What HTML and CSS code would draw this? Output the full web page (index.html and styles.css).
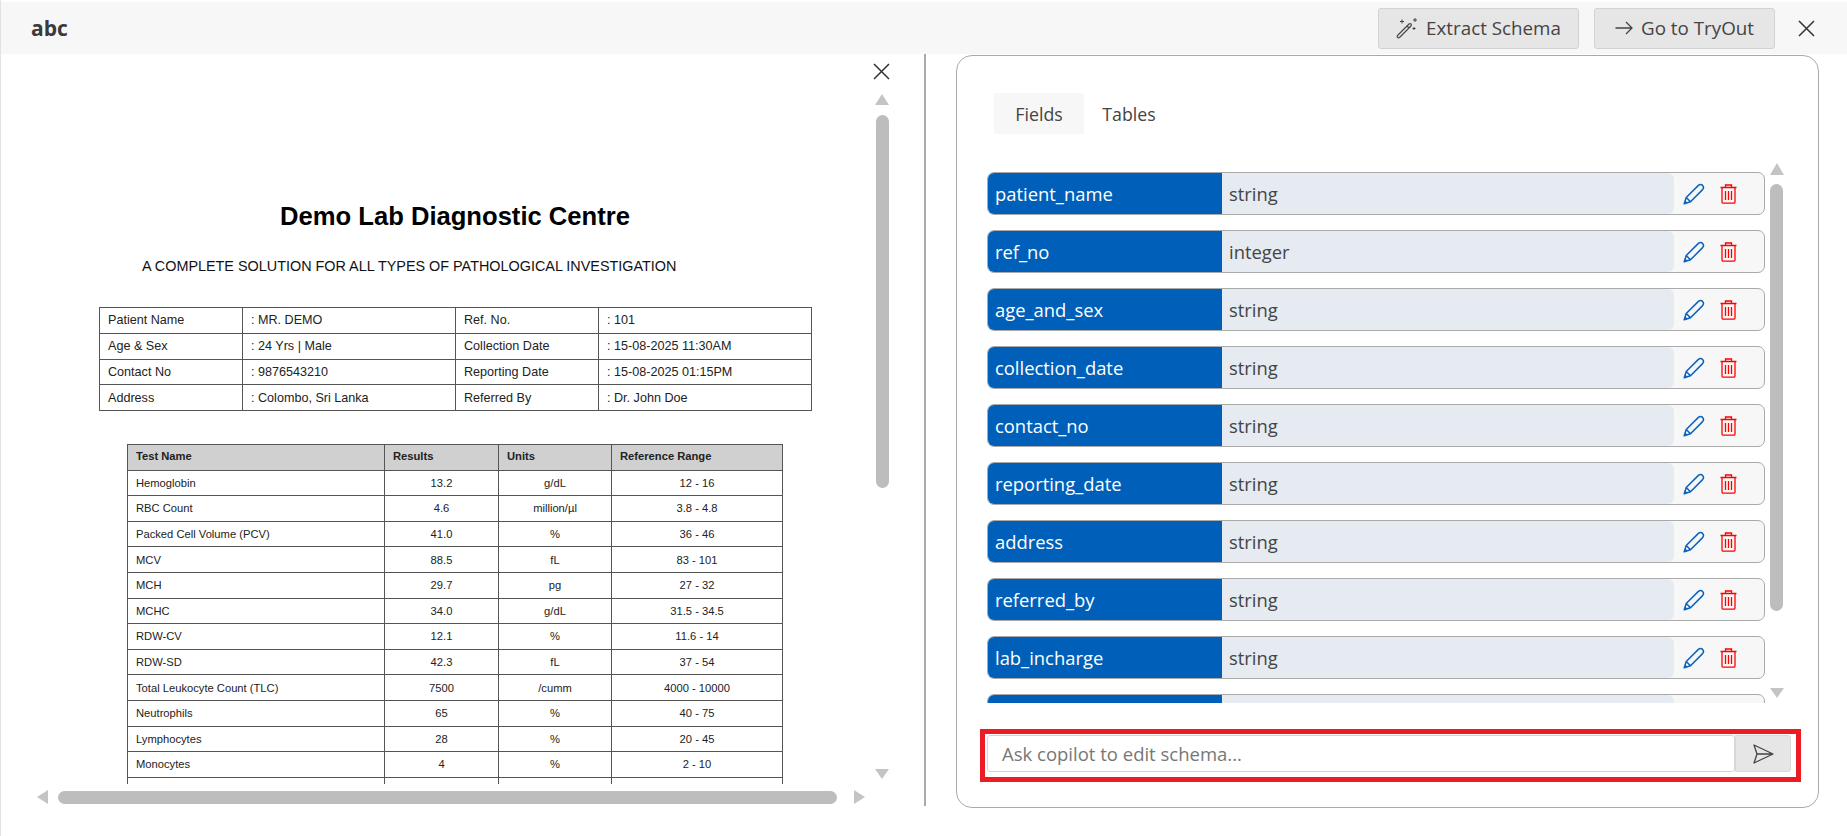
FILE: index.html
```html
<!DOCTYPE html>
<html>
<head>
<meta name="viewport" content="width=device-width, initial-scale=1.0"/>
<link rel="stylesheet" href="styles.css">
</head>
<body>

<div class="topBar">
    <div class="docTitle">abc</div>
    <button class="topBtn btnExtract">
        <svg width="22" height="22" viewBox="0 0 22 22" fill="none" stroke="#444" stroke-width="1.2"><path d="M1.5 18.5 L13 7 Q14 6.2 15 7 Q15.8 8 15 9 L3.5 20.5 Q2.5 21.2 1.5 20.5 Q0.8 19.5 1.5 18.5 Z M11 9 L13 11"/><path d="M6 2.5v4M4 4.5h4M19 1v4M17 3h4M18 10v3M16.5 11.5h3" stroke-width="1"/></svg>
        Extract Schema
    </button>
    <button class="topBtn btnTry">
        <svg width="18" height="14" viewBox="0 0 18 14" fill="none" stroke="#444" stroke-width="1.3"><path d="M0.5 7H17M11 1l6 6-6 6"/></svg>
        Go to TryOut
    </button>
    <svg class="closeTop" width="17" height="17" viewBox="0 0 17 17" stroke="#333" stroke-width="1.5"><path d="M1 1l15 15M16 1L1 16"/></svg>
</div>

<div class="mainArea">

    <div class="leftPane">
        <div class="viewerRow">
            <div class="docView">
                <h1 class="labName">Demo Lab Diagnostic Centre</h1>
                <p class="labSub">A COMPLETE SOLUTION FOR ALL TYPES OF PATHOLOGICAL INVESTIGATION</p>

                <table class="infoTable">
                    <tr><td class="c1">Patient Name</td><td class="c2">: MR. DEMO</td><td class="c3">Ref. No.</td><td>: 101</td></tr>
                    <tr><td>Age &amp; Sex</td><td>: 24 Yrs | Male</td><td>Collection Date</td><td>: 15-08-2025 11:30AM</td></tr>
                    <tr><td>Contact No</td><td>: 9876543210</td><td>Reporting Date</td><td>: 15-08-2025 01:15PM</td></tr>
                    <tr><td>Address</td><td>: Colombo, Sri Lanka</td><td>Referred By</td><td>: Dr. John Doe</td></tr>
                </table>

                <table class="testTable">
                    <thead>
                    <tr><th class="t1">Test Name</th><th class="t2">Results</th><th class="t3">Units</th><th>Reference Range</th></tr>
                    </thead>
                    <tbody>
                    <tr><td>Hemoglobin</td><td>13.2</td><td>g/dL</td><td>12 - 16</td></tr>
                    <tr><td>RBC Count</td><td>4.6</td><td>million/µl</td><td>3.8 - 4.8</td></tr>
                    <tr><td>Packed Cell Volume (PCV)</td><td>41.0</td><td>%</td><td>36 - 46</td></tr>
                    <tr><td>MCV</td><td>88.5</td><td>fL</td><td>83 - 101</td></tr>
                    <tr><td>MCH</td><td>29.7</td><td>pg</td><td>27 - 32</td></tr>
                    <tr><td>MCHC</td><td>34.0</td><td>g/dL</td><td>31.5 - 34.5</td></tr>
                    <tr><td>RDW-CV</td><td>12.1</td><td>%</td><td>11.6 - 14</td></tr>
                    <tr><td>RDW-SD</td><td>42.3</td><td>fL</td><td>37 - 54</td></tr>
                    <tr><td>Total Leukocyte Count (TLC)</td><td>7500</td><td>/cumm</td><td>4000 - 10000</td></tr>
                    <tr><td>Neutrophils</td><td>65</td><td>%</td><td>40 - 75</td></tr>
                    <tr><td>Lymphocytes</td><td>28</td><td>%</td><td>20 - 45</td></tr>
                    <tr><td>Monocytes</td><td>4</td><td>%</td><td>2 - 10</td></tr>
                    <tr><td>Eosinophils</td><td>3</td><td>%</td><td>1 - 6</td></tr>
                    </tbody>
                </table>
            </div>
            <div class="vScroll">
                <svg class="closeDoc" width="17" height="17" viewBox="0 0 17 17" stroke="#333" stroke-width="1.5"><path d="M1 1l15 15M16 1L1 16"/></svg>
                <div class="arrowUp"></div>
                <div class="thumbV docThumb"></div>
                <div class="arrowDown docDown"></div>
            </div>
        </div>
        <div class="hScroll">
            <div class="arrowLeft"></div>
            <div class="thumbH"></div>
            <div class="arrowRight"></div>
        </div>
    </div>

    <div class="schemaCard">
        <div class="tabs">
            <div class="tab tabOn">Fields</div>
            <div class="tab">Tables</div>
        </div>

        <div class="fieldWrap">
            <div class="fieldList">
                <div class="fieldRow"><div class="fName">patient_name</div><div class="fType">string</div><div class="fIcons"><svg class="icoEdit" width="22" height="22" viewBox="0 0 22 22"><use href="#pen"/></svg><svg class="icoDel" width="17" height="20" viewBox="0 0 17 20"><use href="#bin"/></svg></div></div>
                <div class="fieldRow"><div class="fName">ref_no</div><div class="fType">integer</div><div class="fIcons"><svg class="icoEdit" width="22" height="22" viewBox="0 0 22 22"><use href="#pen"/></svg><svg class="icoDel" width="17" height="20" viewBox="0 0 17 20"><use href="#bin"/></svg></div></div>
                <div class="fieldRow"><div class="fName">age_and_sex</div><div class="fType">string</div><div class="fIcons"><svg class="icoEdit" width="22" height="22" viewBox="0 0 22 22"><use href="#pen"/></svg><svg class="icoDel" width="17" height="20" viewBox="0 0 17 20"><use href="#bin"/></svg></div></div>
                <div class="fieldRow"><div class="fName">collection_date</div><div class="fType">string</div><div class="fIcons"><svg class="icoEdit" width="22" height="22" viewBox="0 0 22 22"><use href="#pen"/></svg><svg class="icoDel" width="17" height="20" viewBox="0 0 17 20"><use href="#bin"/></svg></div></div>
                <div class="fieldRow"><div class="fName">contact_no</div><div class="fType">string</div><div class="fIcons"><svg class="icoEdit" width="22" height="22" viewBox="0 0 22 22"><use href="#pen"/></svg><svg class="icoDel" width="17" height="20" viewBox="0 0 17 20"><use href="#bin"/></svg></div></div>
                <div class="fieldRow"><div class="fName">reporting_date</div><div class="fType">string</div><div class="fIcons"><svg class="icoEdit" width="22" height="22" viewBox="0 0 22 22"><use href="#pen"/></svg><svg class="icoDel" width="17" height="20" viewBox="0 0 17 20"><use href="#bin"/></svg></div></div>
                <div class="fieldRow"><div class="fName">address</div><div class="fType">string</div><div class="fIcons"><svg class="icoEdit" width="22" height="22" viewBox="0 0 22 22"><use href="#pen"/></svg><svg class="icoDel" width="17" height="20" viewBox="0 0 17 20"><use href="#bin"/></svg></div></div>
                <div class="fieldRow"><div class="fName">referred_by</div><div class="fType">string</div><div class="fIcons"><svg class="icoEdit" width="22" height="22" viewBox="0 0 22 22"><use href="#pen"/></svg><svg class="icoDel" width="17" height="20" viewBox="0 0 17 20"><use href="#bin"/></svg></div></div>
                <div class="fieldRow"><div class="fName">lab_incharge</div><div class="fType">string</div><div class="fIcons"><svg class="icoEdit" width="22" height="22" viewBox="0 0 22 22"><use href="#pen"/></svg><svg class="icoDel" width="17" height="20" viewBox="0 0 17 20"><use href="#bin"/></svg></div></div>
                <div class="fieldRow"><div class="fName"></div><div class="fType"></div><div class="fIcons"></div></div>
            </div>
            <div class="vScroll listScroll">
                <div class="arrowUp"></div>
                <div class="thumbV listThumb"></div>
                <div class="arrowDown listDown"></div>
            </div>
        </div>

        <div class="askBox">
            <input class="askInput" type="text" placeholder="Ask copilot to edit schema...">
            <button class="askSend">
                <svg width="21" height="20" viewBox="0 0 21 20" fill="none" stroke="#444" stroke-width="1.3" stroke-linejoin="round"><path d="M1 1l19 9-19 9 3-9zM4 10h16"/></svg>
            </button>
        </div>
    </div>

</div>

<svg class="iconDefs" width="0" height="0">
    <symbol id="pen" viewBox="0 0 22 22"><path d="M1.2 20.8L3.2 14.5 15.4 2.4Q17.6 0.6 19.6 2.4 21.4 4.4 19.6 6.6L7.5 18.8ZM3.2 14.5L7.5 18.8" fill="none" stroke="#0b62bd" stroke-width="1.5" stroke-linejoin="round"/><path d="M1.2 20.8L2.2 17.5 4.5 19.8Z" fill="#0b62bd"/></symbol>
    <symbol id="bin" viewBox="0 0 17 20"><path d="M5.5 3.5V1h6v2.5M0.5 3.5h16M2 3.5V18q0 1.2 1.2 1.2h10.6q1.2 0 1.2-1.2V3.5M5.5 7v9M8.5 7v9M11.5 7v9" fill="none" stroke="#f00" stroke-width="1.3"/></svg>
</svg>

</body>
</html>
```

FILE: styles.css
```css
* {
    box-sizing: border-box;
}

body {
    margin: 0;
    height: 836px;
    overflow: hidden;
    background: #ffffff;
    border-left: 1px solid #e2e2e2;
    font-family: "Open Sans", "Noto Sans", sans-serif;
    color: #444444;
}

button {
    font-family: inherit;
}

/* top bar */
.topBar {
    margin-top: 2px;
    height: 52px;
    background: #f7f7f7;
    display: flex;
    align-items: center;
    padding-left: 30px;
}

.docTitle {
    font-size: 21px;
    font-weight: 700;
    color: #3a3a3a;
    margin-right: auto;
}

.topBtn {
    height: 41px;
    display: flex;
    align-items: center;
    justify-content: center;
    gap: 8px;
    background: #e6e6e6;
    border: 1px solid #d2d2d2;
    border-radius: 3px;
    color: #444444;
    font-size: 18.8px;
    padding: 0;
}

.btnExtract {
    width: 201px;
    margin-right: 15px;
}

.btnTry {
    width: 181px;
    margin-right: 23px;
}

.closeTop {
    margin-right: 32px;
}

.mainArea {
    display: flex;
    height: 754px;
}

/* left side, the document */
.leftPane {
    width: 925px;
    height: 752px;
    border-right: 2px solid #aaaaaa;
}

.viewerRow {
    display: flex;
    height: 730px;
}

.docView {
    width: 871px;
    height: 730px;
    overflow: hidden;
    color: #222222;
    font-family: "Liberation Sans", Arial, sans-serif;
}

.labName {
    font-size: 25.6px;
    font-weight: 700;
    color: #000000;
    text-align: center;
    margin: 147px 0 0 0;
    width: 908px;
    line-height: 30px;
}

.labSub {
    font-size: 14.4px;
    margin: 25px 0 0 141px;
    line-height: 20px;
    color: #111111;
}

.infoTable {
    border-collapse: collapse;
    margin: 31px 0 0 98px;
    width: 713px;
    table-layout: fixed;
    border: 1px solid #555555;
}

.infoTable td {
    border: 1px solid #555555;
    height: 25.75px;
    padding: 0 0 0 8px;
    font-size: 12.6px;
}

.infoTable .c1 { width: 143px; }
.infoTable .c2 { width: 213px; }
.infoTable .c3 { width: 143px; }

.testTable {
    border-collapse: collapse;
    margin: 33px 0 0 126px;
    width: 656px;
    table-layout: fixed;
}

.testTable th,
.testTable td {
    border: 1px solid #555555;
    height: 25.6px;
    font-size: 11.2px;
    padding: 0;
    text-align: center;
}

.testTable th {
    background: #d0d0d0;
    text-align: left;
    padding: 0 0 2px 8px;
    font-weight: 700;
}

.testTable td:first-child {
    text-align: left;
    padding-left: 8px;
}

.testTable .t1 { width: 257px; }
.testTable .t2 { width: 114px; }
.testTable .t3 { width: 113px; }

/* scrollbars */
.vScroll {
    width: 20px;
    display: flex;
    flex-direction: column;
    align-items: center;
}

.closeDoc {
    margin: 9px 2px 0 0;
    flex: none;
}

.arrowUp {
    width: 0;
    height: 0;
    border-left: 7px solid transparent;
    border-right: 7px solid transparent;
    border-bottom: 11px solid #c4c4c4;
    margin-top: 14px;
    flex: none;
}

.arrowDown {
    width: 0;
    height: 0;
    border-left: 7px solid transparent;
    border-right: 7px solid transparent;
    border-top: 10px solid #c4c4c4;
    flex: none;
}

.thumbV {
    width: 13px;
    background: #bdbdbd;
    border-radius: 7px;
    flex: none;
}

.docThumb {
    height: 373px;
    margin-top: 10px;
}

.docDown {
    margin-top: 281px;
}

.hScroll {
    display: flex;
    align-items: center;
    height: 14px;
    margin-top: 6px;
    padding-left: 36px;
}

.arrowLeft {
    width: 0;
    height: 0;
    border-top: 7px solid transparent;
    border-bottom: 7px solid transparent;
    border-right: 11px solid #c4c4c4;
}

.arrowRight {
    width: 0;
    height: 0;
    border-top: 7px solid transparent;
    border-bottom: 7px solid transparent;
    border-left: 11px solid #c4c4c4;
    margin-left: 17px;
}

.thumbH {
    width: 779px;
    height: 13px;
    background: #bdbdbd;
    border-radius: 7px;
    margin-left: 10px;
}

/* right side, the schema */
.schemaCard {
    width: 863px;
    height: 753px;
    margin-left: 30px;
    border: 1px solid #aaaaaa;
    border-radius: 16px;
    margin-top: 1px;
}

.tabs {
    display: flex;
    margin: 37px 0 0 37px;
}

.tab {
    width: 90px;
    height: 41px;
    line-height: 43px;
    text-align: center;
    font-size: 17.8px;
    color: #444444;
}

.tabOn {
    background: #f7f7f7;
}

.fieldWrap {
    display: flex;
    margin: 29px 0 0 30px;
    height: 540px;
}

.fieldList {
    width: 778px;
    height: 540px;
    padding-top: 9px;
    overflow: hidden;
    display: flex;
    flex-direction: column;
    gap: 15px;
}

.fieldRow {
    flex: none;
    height: 43px;
    display: flex;
    border: 1px solid #aaaaaa;
    border-radius: 7px;
    background: #f7f7f7;
    overflow: hidden;
}

.fName {
    width: 234px;
    background: #0060b9;
    color: #ffffff;
    font-size: 18.4px;
    line-height: 41px;
    padding-left: 7px;
}

.fType {
    width: 452px;
    background: #e6eaf1;
    border-radius: 0 6px 6px 0;
    color: #444444;
    font-size: 18.4px;
    line-height: 41px;
    padding-left: 7px;
}

.fIcons {
    flex: 1;
    display: flex;
    align-items: center;
    padding-left: 9px;
    gap: 15px;
}

.iconDefs {
    position: absolute;
}

.listScroll {
    width: 13px;
    margin-left: 5px;
}

.listScroll .arrowUp {
    margin-top: 0;
    border-bottom-width: 12px;
}

.listThumb {
    height: 427px;
    margin-top: 9px;
}

.listDown {
    margin-top: 77px;
}

.askBox {
    display: flex;
    margin: 26px 0 0 23px;
    width: 821px;
    height: 53px;
    border: 5px solid #ed1c24;
    padding: 1px 5px 5px 2px;
}

.askInput {
    flex: 1;
    height: 37px;
    border: 1px solid #d4d4d4;
    border-radius: 3px;
    padding: 0 14px;
    font-family: inherit;
    font-size: 18.5px;
    outline: none;
}

.askInput::placeholder {
    color: #777777;
}

.askSend {
    width: 56px;
    height: 37px;
    background: #e6e6e6;
    border: 1px solid #d9d9d9;
    border-radius: 0 3px 3px 0;
    display: flex;
    align-items: center;
    justify-content: center;
    padding: 0;
}
```
